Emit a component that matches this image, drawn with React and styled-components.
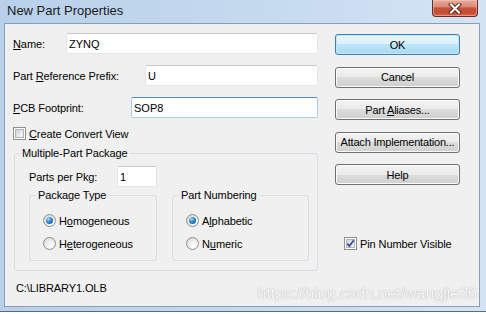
import React from 'react'
import styled, { createGlobalStyle } from 'styled-components'

const GlobalStyle = createGlobalStyle`
	html, body {
		margin: 0;
		padding: 0;
		background: #ffffff;
	}
	body {
		font-family: "Liberation Sans", Arial, sans-serif;
		font-size: 11px;
		color: #000;
	}
`

const Window = styled.div`
	position: relative;
	width: 486px;
	height: 314px;
	box-sizing: border-box;
	display: flex;
	flex-direction: column;
	background: linear-gradient(to right, #b8d0e9 0%, #c6daef 55%, #d4e4f4 100%);
	border-bottom: 2px solid #ffffff;
	box-shadow: inset 0 -1px 0 #5b6b7e;
	overflow: hidden;
`

const TitleBar = styled.div`
	height: 23px;
	flex: 0 0 23px;
	display: flex;
	align-items: flex-start;
	justify-content: space-between;
	padding-left: 7px;
`

const Title = styled.div`
	font-size: 13px;
	line-height: 23px;
	color: #1a1a1a;
	margin-top: -1px;
`

const CloseBtn = styled.div`
	width: 46px;
	height: 17px;
	margin-right: 8px;
	box-sizing: border-box;
	border: 1px solid #6a2b21;
	border-top: none;
	border-radius: 0 0 4px 4px;
	background: linear-gradient(#e9ab9b 0%, #d98a76 42%, #c3513a 50%, #c84a32 80%, #d96a4f 100%);
	box-shadow: inset 0 0 0 1px rgba(255, 210, 200, 0.45);
	display: flex;
	align-items: center;
	justify-content: center;
`

const Client = styled.div`
	position: relative;
	flex: 1;
	margin: 0 6px 5px 4px;
	border: 1px solid #8a9db5;
	background: #f0f0f0;
	display: flex;
	padding: 9px 0 0 8px;
	letter-spacing: -0.1px;
`

const LeftCol = styled.div`
	width: 305px;
	display: flex;
	flex-direction: column;
`

const FieldRow = styled.div`
	display: flex;
	align-items: center;
	height: 21px;
	& + & {
		margin-top: 11px;
	}
`

const FieldLabel = styled.label`
	width: ${p => p.$w}px;
	flex: 0 0 ${p => p.$w}px;
	white-space: nowrap;
`

const Key = styled.span`
	text-decoration: underline;
`

const TextInput = styled.input`
	box-sizing: border-box;
	height: 21px;
	width: ${p => (p.$w ? `${p.$w}px` : 'auto')};
	flex: ${p => (p.$w ? `0 0 ${p.$w}px` : '1')};
	min-width: 0;
	margin: 0;
	padding: 0 0 0 2px;
	font-family: "Liberation Sans", Arial, sans-serif;
	font-size: 11px;
	color: #000;
	background: #ffffff;
	outline: none;
	border: 1px solid ${p => (p.$focus ? '#a9cdef' : '#e2e6ec')};
	border-top-color: ${p => (p.$focus ? '#4f8fc9' : '#c4c8ce')};
	border-radius: 2px;
`

const CheckRow = styled.label`
	display: flex;
	align-items: center;
	gap: 3px;
	height: 13px;
	margin-top: ${p => p.$mt}px;
	padding-left: ${p => p.$pl || 0}px;
	white-space: nowrap;
`

const Box = styled.span`
	box-sizing: border-box;
	width: 13px;
	height: 13px;
	flex: 0 0 13px;
	border: 1px solid #8f8f8f;
	background: #ffffff;
	padding: 1px;
	display: flex;
`

const BoxInner = styled.span`
	flex: 1;
	position: relative;
	border: 1px solid #aeb3b9;
	background: linear-gradient(135deg, #cdd2d8 0%, #e9ebee 60%, #f8f8f8 100%);
	& svg {
		position: absolute;
		left: -2px;
		top: -2px;
	}
`

const Group = styled.fieldset`
	box-sizing: border-box;
	width: ${p => p.$w}px;
	margin: ${p => p.$margin};
	padding: 0;
	border: 1px solid #d5dfe5;
	border-radius: 3px;
	min-width: 0;
`

const Legend = styled.legend`
	margin-left: ${p => p.$ml}px;
	padding: 0 2px;
	font-size: 11px;
	line-height: 13px;
	white-space: nowrap;
`

const GroupBody = styled.div`
	padding: ${p => p.$pad};
	display: flex;
	flex-direction: column;
	gap: ${p => p.$gap || 0}px;
`

const PartsRow = styled.div`
	display: flex;
	align-items: center;
	height: 21px;
`

const InnerGroups = styled.div`
	display: flex;
	gap: 15px;
	margin-top: 2px;
`

const RadioRow = styled.label`
	display: flex;
	align-items: center;
	gap: 3px;
	height: 13px;
	white-space: nowrap;
`

const RadioDot = styled.span`
	box-sizing: border-box;
	width: 13px;
	height: 13px;
	flex: 0 0 13px;
	border-radius: 50%;
	border: 1px solid #8e8f8f;
	background: radial-gradient(circle at 65% 70%, #ffffff 0%, #f0f0f0 40%, #cfcfcf 100%);
	display: flex;
	align-items: center;
	justify-content: center;
	&::after {
		content: '';
		display: ${p => (p.$on ? 'block' : 'none')};
		width: 7px;
		height: 7px;
		border-radius: 50%;
		background: radial-gradient(circle at 35% 30%, #a6dcfa 0%, #2f86cf 45%, #0f4a8c 100%);
	}
`

const PathText = styled.div`
	margin: 11px 0 0 3px;
	line-height: 13px;
`

const RightCol = styled.div`
	width: 125px;
	margin: 1px 0 0 17px;
	display: flex;
	flex-direction: column;
	gap: 11.5px;
`

const Button = styled.button`
	box-sizing: border-box;
	height: 21px;
	width: 125px;
	margin: 0;
	padding: 0;
	font-family: "Liberation Sans", Arial, sans-serif;
	font-size: 11px;
	letter-spacing: -0.2px;
	color: #000;
	white-space: nowrap;
	border-radius: 3px;
	border: 1px solid ${p => (p.$default ? '#3c7fb1' : '#707070')};
	background: ${p => p.$default
		? 'linear-gradient(#eaf6fd 0%, #d9f0fc 50%, #bee6fd 50%, #a7d9f5 100%)'
		: 'linear-gradient(#f2f2f2 0%, #ebebeb 50%, #dddddd 50%, #cfcfcf 100%)'};
	box-shadow: inset 0 0 0 1px ${p => (p.$default ? '#c5e7fb' : '#fbfbfb')};
`

const Watermark = styled.div`
	position: absolute;
	right: 2px;
	bottom: 4px;
	font-size: 16px;
	line-height: 17px;
	letter-spacing: 0;
	color: #f8f8f8;
	text-shadow: 0 0 1px #b4b4b4, 0 0 1px #c0c0c0;
	pointer-events: none;
`

function CloseIcon() {
	return (
		<svg width="14" height="11" viewBox="0 0 14 11">
			<path d="M3 1.5 L11 9.5 M11 1.5 L3 9.5" stroke="#5a2a22" strokeWidth="4" strokeLinecap="square" />
			<path d="M3 1.5 L11 9.5 M11 1.5 L3 9.5" stroke="#ffffff" strokeWidth="2" strokeLinecap="square" />
		</svg>
	)
}

function Checkbox({ checked }) {
	return (
		<Box>
			<BoxInner>
				{checked && (
					<svg width="11" height="11" viewBox="0 0 11 11">
						<path d="M2.3 5.6 L4.4 8 L8.8 2.2" fill="none" stroke="#3a4f91" strokeWidth="1.8" />
					</svg>
				)}
			</BoxInner>
		</Box>
	)
}

function Radio({ on, children }) {
	return (
		<RadioRow>
			<RadioDot $on={on} />
			<span>{children}</span>
		</RadioRow>
	)
}

export default function App() {
	return (
		<>
			<GlobalStyle />
			<Window>
				<TitleBar>
					<Title>New Part Properties</Title>
					<CloseBtn><CloseIcon /></CloseBtn>
				</TitleBar>
				<Client>
					<LeftCol>
						<FieldRow>
							<FieldLabel $w={53}><Key>N</Key>ame:</FieldLabel>
							<TextInput value="ZYNQ" readOnly />
						</FieldRow>
						<FieldRow>
							<FieldLabel $w={132}>Part <Key>R</Key>eference Prefix:</FieldLabel>
							<TextInput value="U" readOnly />
						</FieldRow>
						<FieldRow>
							<FieldLabel $w={118}><Key>P</Key>CB Footprint:</FieldLabel>
							<TextInput value="SOP8" readOnly $focus />
						</FieldRow>

						<CheckRow $mt={9}>
							<Checkbox />
							<span><Key>C</Key>reate Convert View</span>
						</CheckRow>

						<Group $w={304} $margin="7px 0 0 1px">
							<Legend $ml={5}>Multiple-Part Package</Legend>
							<GroupBody $pad="6px 8px 9px 14px">
								<PartsRow>
									<FieldLabel $w={88}>Parts per Pkg:</FieldLabel>
									<TextInput value="1" readOnly $w={40} />
								</PartsRow>
								<InnerGroups>
									<Group $w={128} $margin="0">
										<Legend $ml={6}>Package Type</Legend>
										<GroupBody $pad="12px 0 10px 13px" $gap={10}>
											<Radio on>H<Key>o</Key>mogeneous</Radio>
											<Radio>H<Key>e</Key>terogeneous</Radio>
										</GroupBody>
									</Group>
									<Group $w={137} $margin="0">
										<Legend $ml={6}>Part Numbering</Legend>
										<GroupBody $pad="12px 0 10px 13px" $gap={10}>
											<Radio on>A<Key>l</Key>phabetic</Radio>
											<Radio>N<Key>u</Key>meric</Radio>
										</GroupBody>
									</Group>
								</InnerGroups>
							</GroupBody>
						</Group>

						<PathText>C:\LIBRARY1.OLB</PathText>
					</LeftCol>

					<RightCol>
						<Button $default>OK</Button>
						<Button>Cancel</Button>
						<Button>Part <Key>A</Key>liases...</Button>
						<Button>Attach Implementation...</Button>
						<Button>Help</Button>
						<CheckRow $mt={40.5} $pl={9}>
							<Checkbox checked />
							<span>Pin Number Visible</span>
						</CheckRow>
					</RightCol>

					<Watermark>https://blog.csdn.net/wangjie36</Watermark>
				</Client>
			</Window>
		</>
	)
}
